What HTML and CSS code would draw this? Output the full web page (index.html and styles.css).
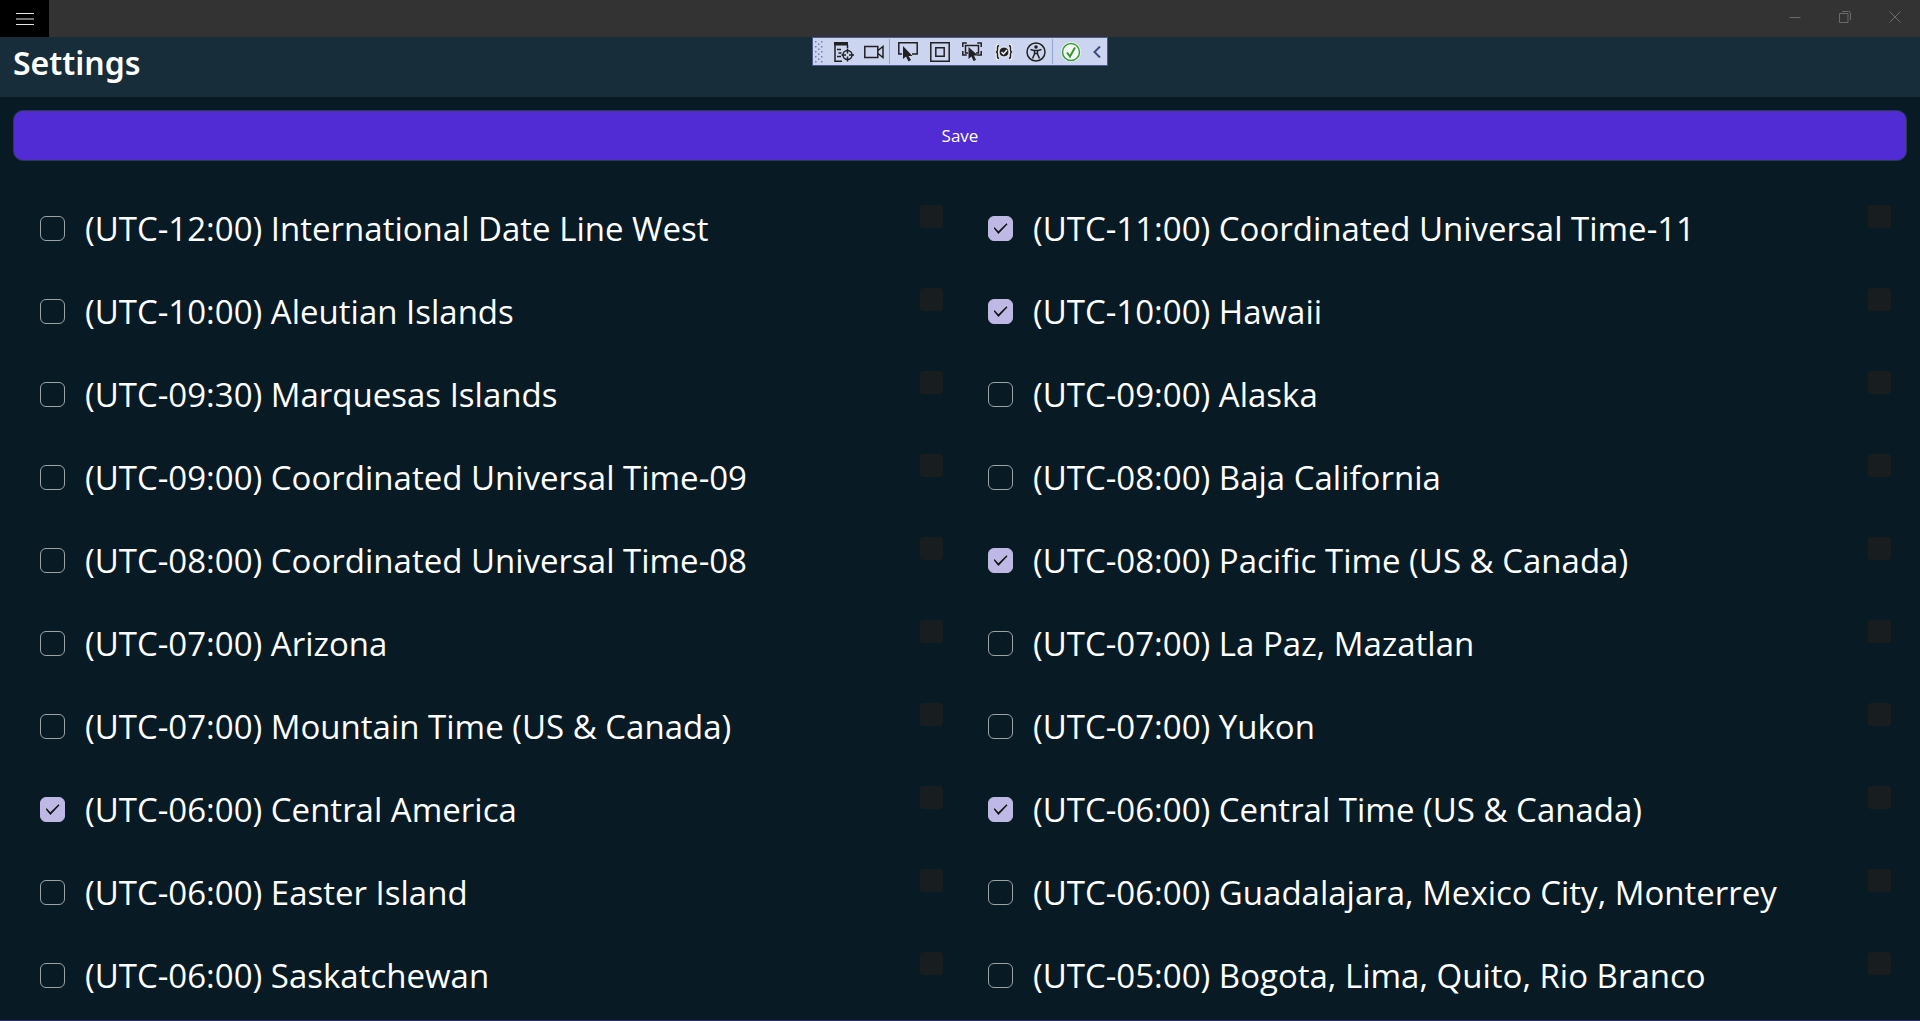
FILE: index.html
```html
<!DOCTYPE html>
<html lang="en">
<head>
<meta charset="utf-8">
<title>Settings</title>
<link rel="stylesheet" href="styles.css">
</head>
<body>
<div class="titlebar">
  <button class="menu" aria-label="Menu"><svg width="20" height="16" viewBox="0 0 20 16"><path d="M1 2.500h18M1 8h18M1 13.500h18" stroke="#e6e6e6" stroke-width="1.200"/></svg></button>
  <div class="window-controls">
    <button aria-label="Minimize"><svg width="12" height="12" viewBox="0 0 12 12"><path d="M.5 6.500h11"/></svg></button>
    <button aria-label="Restore"><svg width="12" height="12" viewBox="0 0 12 12"><path d="M.5 2.500h8.500v9h-8.500zM3 .5h6.500q2 0 2 2v6.500"/></svg></button>
    <button aria-label="Close"><svg width="12" height="12" viewBox="0 0 12 12"><path d="M.5.5l11 11M11.500.5l-11 11"/></svg></button>
  </div>
</div>

<div class="debugbar" role="toolbar" aria-label="Debug tools">
  <svg class="grip" width="9" height="22" viewBox="0 0 9 22" fill="#7080b4"><path d="M0 0h1.500v1.500H0zM6 0h1.500v1.500H6zM3 2.500h1.500v1.500H3zM0 5h1.500v1.500H0zM6 5h1.500v1.500H6zM3 7.500h1.500v1.500H3zM0 10h1.500v1.500H0zM6 10h1.500v1.500H6zM3 12.500h1.500v1.500H3zM0 15h1.500v1.500H0zM6 15h1.500v1.500H6zM3 17.500h1.500v1.500H3zM0 20h1.500v1.500H0zM6 20h1.500v1.500H6z"/></svg>
  <button class="narrow" aria-label="Live visual tree"><svg width="20" height="20" viewBox="0 0 20 20"><path d="M1 3v16.300h7M13.500 3v3M3 7.500h4M4.500 11h3M3 14.500h4"/><path d="M0 0h14v3.500H0z" fill="#212121" stroke="none"/><circle cx="13.500" cy="13" r="4.500"/><path d="M13.500 6.500v5M13.500 14.500v5M7.500 13h4.500M15 13h5"/></svg></button>
  <button class="narrow" aria-label="Record"><svg width="20" height="14" viewBox="0 0 20 14"><path d="M.8 1.500h13v11h-13zM14 5.500l5-4v11l-5-4"/></svg></button>
  <span class="divider"></span>
  <button aria-label="Select element"><svg width="20" height="20" viewBox="0 0 20 20"><path d="M4 12H.8V.8h18.400V12H14"/><path d="M5 4v13l3-2.500 2.500 5 2.500-1.500-2.500-4h4z" fill="#212121" stroke="none"/></svg></button>
  <button aria-label="Display layout adorners"><svg width="20" height="20" viewBox="0 0 20 20"><path d="M.8.8h18.400v18.400H.8zM5.800 5.800h8.400v8.400H5.800z"/></svg></button>
  <button aria-label="Track focused element"><svg width="20" height="20" viewBox="0 0 20 20"><path d="M.8 5V1h4M15.200 1h4v4M.8 9v4h4M19.200 9v4h-4M6 11H3.500V3.500h13V11H14"/><path d="M6.500 5v12l3-2.500 2 4.500 2.500-1-2-4.500h4z" fill="#212121" stroke="none"/></svg></button>
  <button aria-label="Binding failures"><svg width="18" height="16" viewBox="0 0 18 16"><path d="M4 1.500Q2.500 1.500 2.500 4v2Q2.500 8 1 8q1.500 0 1.500 2v2q0 2.500 1.500 2.500M14 1.500q1.500 0 1.500 2.500v2q0 2 1.500 2-1.500 0-1.500 2v2q0 2.500-1.500 2.500" stroke="#f4f5fa" stroke-width="4"/><path d="M4 1.500Q2.500 1.500 2.500 4v2Q2.500 8 1 8q1.500 0 1.500 2v2q0 2.500 1.500 2.500M14 1.500q1.500 0 1.500 2.500v2q0 2 1.500 2-1.500 0-1.500 2v2q0 2.500-1.500 2.500"/><circle cx="9" cy="8" r="5" fill="#212121" stroke="#f4f5fa" stroke-width="1"/><path d="M6.500 8l2 2 3.500-4" stroke="#f2f2f2"/></svg></button>
  <button aria-label="Accessibility"><svg width="20" height="20" viewBox="0 0 20 20"><circle cx="10" cy="10" r="9"/><circle cx="10" cy="5" r="1.800" fill="#212121" stroke="none"/><path d="M4.500 7.500L8 8.500h4l3.500-1M8.500 8.500v3.500L6.500 16.500M11.500 8.500v3.500l2 4.500M8.500 11.500h3"/></svg></button>
  <span class="divider"></span>
  <button aria-label="Hot reload"><svg width="20" height="20" viewBox="0 0 20 20"><circle cx="10" cy="10" r="10" fill="#f5f7f5" stroke="none"/><circle cx="10" cy="10" r="8.500" stroke="#389b38" fill="none"/><path d="M6 10.500l3 4 5-9" stroke="#309630" stroke-width="2"/></svg></button>
  <button class="collapse" aria-label="Collapse"><svg width="8" height="12" viewBox="0 0 8 12"><path d="M7 .5L1.500 6 7 11.500" stroke="#3f4b80" stroke-width="2"/></svg></button>
</div>

<header class="header"><h1>Settings</h1></header>
<main>
  <div class="actions"><button class="save">Save</button></div>
  <div class="zones">
    <label class="zone"><input type="checkbox"><span>(UTC-12:00) International Date Line West</span><i class="swatch"></i></label>
    <label class="zone"><input type="checkbox" checked><span>(UTC-11:00) Coordinated Universal Time-11</span><i class="swatch"></i></label>
    <label class="zone"><input type="checkbox"><span>(UTC-10:00) Aleutian Islands</span><i class="swatch"></i></label>
    <label class="zone"><input type="checkbox" checked><span>(UTC-10:00) Hawaii</span><i class="swatch"></i></label>
    <label class="zone"><input type="checkbox"><span>(UTC-09:30) Marquesas Islands</span><i class="swatch"></i></label>
    <label class="zone"><input type="checkbox"><span>(UTC-09:00) Alaska</span><i class="swatch"></i></label>
    <label class="zone"><input type="checkbox"><span>(UTC-09:00) Coordinated Universal Time-09</span><i class="swatch"></i></label>
    <label class="zone"><input type="checkbox"><span>(UTC-08:00) Baja California</span><i class="swatch"></i></label>
    <label class="zone"><input type="checkbox"><span>(UTC-08:00) Coordinated Universal Time-08</span><i class="swatch"></i></label>
    <label class="zone"><input type="checkbox" checked><span>(UTC-08:00) Pacific Time (US &amp; Canada)</span><i class="swatch"></i></label>
    <label class="zone"><input type="checkbox"><span>(UTC-07:00) Arizona</span><i class="swatch"></i></label>
    <label class="zone"><input type="checkbox"><span>(UTC-07:00) La Paz, Mazatlan</span><i class="swatch"></i></label>
    <label class="zone"><input type="checkbox"><span>(UTC-07:00) Mountain Time (US &amp; Canada)</span><i class="swatch"></i></label>
    <label class="zone"><input type="checkbox"><span>(UTC-07:00) Yukon</span><i class="swatch"></i></label>
    <label class="zone"><input type="checkbox" checked><span>(UTC-06:00) Central America</span><i class="swatch"></i></label>
    <label class="zone"><input type="checkbox" checked><span>(UTC-06:00) Central Time (US &amp; Canada)</span><i class="swatch"></i></label>
    <label class="zone"><input type="checkbox"><span>(UTC-06:00) Easter Island</span><i class="swatch"></i></label>
    <label class="zone"><input type="checkbox"><span>(UTC-06:00) Guadalajara, Mexico City, Monterrey</span><i class="swatch"></i></label>
    <label class="zone"><input type="checkbox"><span>(UTC-06:00) Saskatchewan</span><i class="swatch"></i></label>
    <label class="zone"><input type="checkbox"><span>(UTC-05:00) Bogota, Lima, Quito, Rio Branco</span><i class="swatch"></i></label>
  </div>
</main>
</body>
</html>
```

FILE: styles.css
```css
* {
  box-sizing: border-box;
}

body {
  margin: 0;
  min-height: 100vh;
  background: #081a23;
  color: #fff;
  font-family: "Open Sans", sans-serif;
  border-bottom: 1px solid #2b2a72;
}

button {
  padding: 0;
  border: 0;
  background: none;
  color: inherit;
  font-family: inherit;
}

svg {
  display: block;
  fill: none;
}

.titlebar {
  display: flex;
  justify-content: space-between;
  height: 37px;
  background: #333;
}

.menu {
  display: grid;
  place-items: center;
  width: 49px;
  background: #000;
}

.window-controls {
  display: flex;
  height: 33px;
}

.window-controls button {
  display: grid;
  place-items: center;
  width: 50px;
}

.window-controls svg {
  stroke: #6b6b6b;
}

.debugbar {
  position: absolute;
  top: 37px;
  left: 50%;
  transform: translateX(-50%);
  display: flex;
  align-items: center;
  width: 296px;
  height: 29px;
  padding-left: 2px;
  border: 1px solid #4a5790;
  background: #ccd5f0;
}

.debugbar button {
  display: grid;
  place-items: center;
  flex: none;
  width: 32px;
}

.debugbar .narrow {
  width: 30px;
}

.debugbar .collapse {
  width: 20px;
}

.debugbar svg {
  stroke: #212121;
  stroke-width: 1.5;
}

.debugbar .grip {
  flex: none;
  margin-right: 5px;
  stroke: none;
  fill: #7080b4;
}

.divider {
  flex: none;
  width: 1px;
  height: 25px;
  margin-right: 2px;
  background: #94a6d0;
}

.header {
  height: 60px;
  padding-left: 13px;
  background: #172d39;
}

h1 {
  margin: 0;
  font-size: 32px;
  line-height: 52px;
  font-weight: 600;
  font-family: "Noto Sans", sans-serif;
}

main {
  padding: 13px 12px 0;
}

.actions {
  display: grid;
  padding: 0 1px;
}

.save {
  height: 51px;
  border: 1px solid #2a3b4a;
  border-radius: 10px;
  background: #512bd4;
  font-size: 17px;
}

.zones {
  display: grid;
  grid-template-columns: 1fr 1fr;
  grid-auto-rows: 83px;
  padding-top: 26px;
}

.zone {
  display: flex;
  align-items: center;
  gap: 20px;
  padding: 0 17px 0 28px;
  font-size: 33px;
  line-height: 44px;
  white-space: nowrap;
}

.zone input {
  appearance: none;
  flex: none;
  display: grid;
  place-items: center;
  width: 25px;
  height: 25px;
  margin: 0;
  border: 1px solid #9ba3a7;
  border-radius: 6px;
}

.zone input:checked {
  border-color: #beb8e4;
  background: #beb8e4;
}

.zone input:checked::before {
  content: "";
  width: 14px;
  height: 11px;
  background: #111;
  clip-path: polygon(0 45%, 8% 38%, 35% 76%, 93% 2%, 100% 11%, 35% 100%);
}

.swatch {
  align-self: flex-start;
  width: 23px;
  height: 23px;
  margin: 18px 0 0 auto;
  border-radius: 3px;
  background: #181d20;
}
```
